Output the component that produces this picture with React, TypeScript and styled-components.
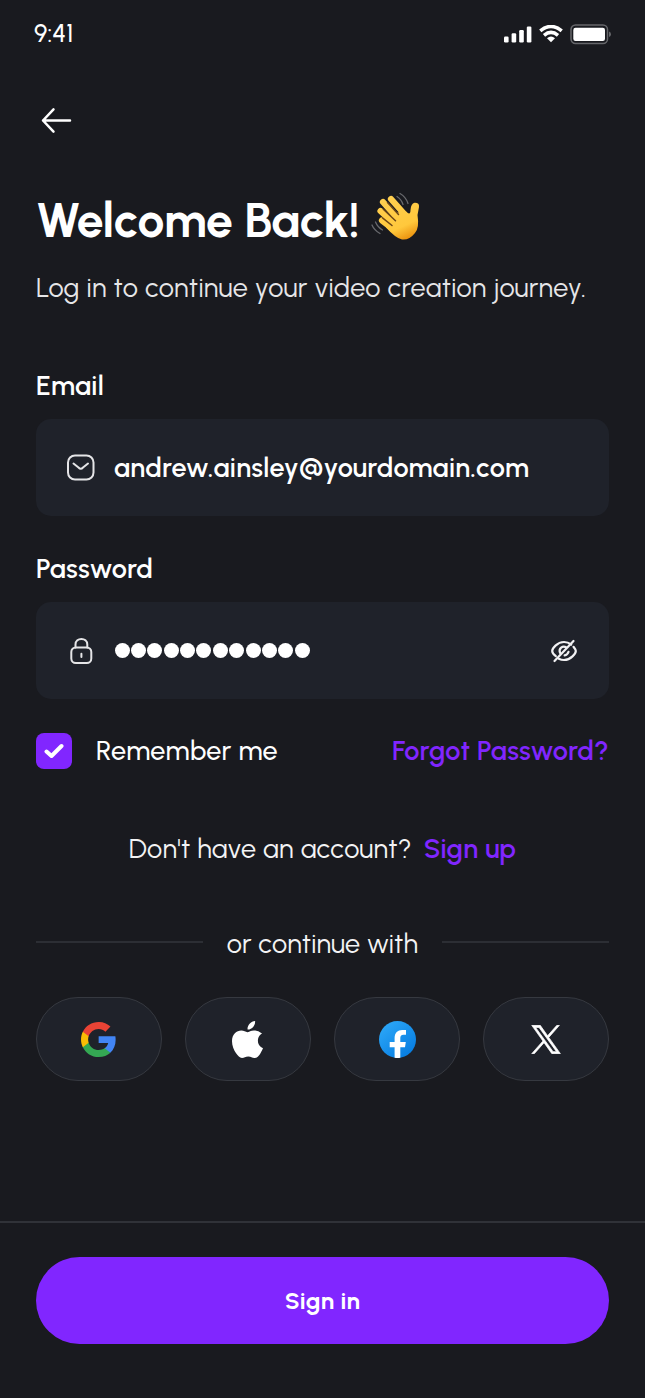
import React from 'react';
import styled, { createGlobalStyle } from 'styled-components';

const GlobalStyle = createGlobalStyle`
  * { box-sizing: border-box; }
  body { margin: 0; background: #191a1f; }
  svg { display: block; flex: none; }
`;

const Screen = styled.div`
  width: 645px;
  height: 1398px;
  display: flex;
  flex-direction: column;
  background: #191a1f;
  color: #fff;
  font-family: Urbanist, Lato, 'Liberation Sans', sans-serif;
  overflow: hidden;
`;

const StatusBar = styled.header`
  height: 65px;
  padding: 0 34px;
  display: flex;
  align-items: center;
  justify-content: space-between;
`;

const StatusIcons = styled.div`
  display: flex;
  align-items: center;
  gap: 7px;
  margin-top: 3px;
`;

const Text = styled.span<{ $size?: number; $weight?: number; $track?: number; $color?: string }>`
  font-size: ${(p) => p.$size ?? 27}px;
  font-weight: ${(p) => p.$weight ?? 400};
  letter-spacing: ${(p) => p.$track ?? 0.3}px;
  color: ${(p) => p.$color ?? '#fff'};
  line-height: 34px;
  white-space: nowrap;
`;

const BackButton = styled.button`
  width: 32px;
  height: 32px;
  margin: 39px 0 0 40px;
  padding: 0;
  border: 0;
  background: none;
`;

const Main = styled.main`
  flex: 1;
  padding: 54px 36px 0;
  display: flex;
  flex-direction: column;
`;

const Heading = styled.div`
  height: 60px;
  display: flex;
  gap: 13px;

  svg {
    margin-top: 2px;
  }
`;

const Title = styled.h1`
  width: 322px;
  margin: 0;
  font-size: 48px;
  font-weight: 700;
  line-height: 60px;
  letter-spacing: 0;
  white-space: nowrap;
`;

const Subtitle = styled.div`
  height: 34px;
  margin: 21px 0 64px;
  display: flex;
`;

const FieldGroup = styled.label`
  height: 147px;
  margin-bottom: 36px;
  display: flex;
  flex-direction: column;
  gap: 16px;
`;

const Field = styled.div`
  height: 97px;
  padding: 0 32px 0 30px;
  display: flex;
  align-items: center;
  border-radius: 15px;
  background: #1f222a;
`;

const FieldIcon = styled.span`
  width: 48px;
  display: flex;
`;

const Dots = styled.span`
  flex: 1;
  display: flex;
  gap: 1.4px;
  padding-left: 0.5px;
`;

const Dot = styled.i`
  width: 15px;
  height: 15px;
  border-radius: 50%;
  background: #fff;
`;

const Options = styled.div`
  height: 36px;
  margin-top: -2px;
  display: flex;
  align-items: center;
  justify-content: space-between;
`;

const Remember = styled.div`
  display: flex;
  align-items: center;
  gap: 24px;
`;

const Checkbox = styled.span`
  width: 36px;
  height: 36px;
  border-radius: 8px;
  background: #8126ff;
  display: grid;
  place-items: center;
`;

const SignUpLine = styled.div`
  height: 34px;
  margin-top: 63px;
  display: flex;
  justify-content: center;
  gap: 12px;
`;

const Divider = styled.div`
  height: 34px;
  margin-top: 61px;
  display: grid;
  grid-template-columns: 167px 1fr 167px;
  align-items: center;
  justify-items: center;
`;

const Rule = styled.i`
  width: 167px;
  height: 2px;
  margin-bottom: 4px;
  background: #2c2e34;
`;

const Socials = styled.div`
  margin-top: 36px;
  display: flex;
  justify-content: space-between;
`;

const SocialButton = styled.button`
  width: 125.5px;
  height: 84px;
  padding: 1px 0 0;
  display: grid;
  place-items: center;
  border: 1px solid #363940;
  border-radius: 42px;
  background: #1f222a;
`;

const Footer = styled.footer`
  height: 177px;
  padding: 34px 36px 0;
  border-top: 2px solid #303238;
`;

const SignIn = styled.button`
  width: 573px;
  height: 87px;
  border: 0;
  border-radius: 44px;
  background: #8126ff;
  font-family: inherit;
`;

const Signal = () => (
  <svg width="28" height="17" viewBox="0 0 28 17" fill="#fff">
    <rect x="0" y="10.5" width="4.6" height="6" rx="1.2" />
    <rect x="7.6" y="7.3" width="4.6" height="9.2" rx="1.2" />
    <rect x="15.2" y="4" width="4.6" height="12.5" rx="1.2" />
    <rect x="22.8" y="0.6" width="4.6" height="15.9" rx="1.2" />
  </svg>
);

const Wifi = () => (
  <svg width="24" height="18" viewBox="0 0 24 18" fill="none" stroke="#fff" strokeWidth="3.5">
    <path d="M1.3 5.9Q12-3 22.7 5.9" />
    <path d="M5 10.3Q12 4.4 19 10.3" />
    <path d="M8 13.2Q12 10 16 13.2L12 17.2Z" fill="#fff" stroke="none" />
  </svg>
);

const Battery = () => (
  <svg width="41" height="21" viewBox="0 0 41 21">
    <rect x="1" y="1" width="36.5" height="18.5" rx="4.5" fill="none" stroke="#65666a" strokeWidth="1.5" />
    <rect x="3.3" y="3.7" width="31.7" height="13.2" rx="2.2" fill="#fff" />
    <path d="M39 7.5Q41 8.3 41 10.3T39 13Z" fill="#65666a" />
  </svg>
);

const Wave = () => (
  <svg width="50" height="50" viewBox="0 0 50 50" fill="none" strokeLinecap="round">
    <defs>
      <linearGradient id="hand" x1="14" y1="6" x2="34" y2="49" gradientUnits="userSpaceOnUse">
        <stop stopColor="#ffcf50" />
        <stop offset=".7" stopColor="#ffc83c" />
        <stop offset="1" stopColor="#e98f0c" />
      </linearGradient>
    </defs>
    <path d="M20 7L35 24M12 10L28 28M9.5 19L26 34M11 28.5L26 40" stroke="url(#hand)" strokeWidth="6.2" />
    <path d="M22 21L35 19.5Q39.5 24 39.5 18Q40 11.5 43.5 10.8Q48.5 10.5 48 15L46.5 23Q48.5 36 44 41Q38 48.5 31 47.5Q25 46.5 15 35.5Z" fill="url(#hand)" />
    <path d="M16.5 10.5L27.5 22.5M12.3 17.3L24.5 28.8M11.5 25.8L21 33.5" stroke="#6b4618" strokeWidth="1.5" />
    <path d="M29 1.5Q35 5 37 11.5M26 4.5Q30.5 7.5 32 12.5M1 33Q3 38 9 41.5M4.5 30Q6.5 35 11.5 38" stroke="#68696d" strokeWidth="1.3" />
  </svg>
);

const Mail = () => (
  <svg width="30" height="28" viewBox="0 0 30 28" fill="none" stroke="#e5e5e7" strokeWidth="2" strokeLinecap="round" strokeLinejoin="round">
    <rect x="2" y="1.5" width="25.5" height="24" rx="7" />
    <path d="M7.5 9.5L12.5 13.5Q14.8 16 17 13.5L22 9.5" />
  </svg>
);

const Lock = () => (
  <svg width="30" height="28" viewBox="0 0 30 28" fill="none" stroke="#e5e5e7" strokeWidth="2" strokeLinecap="round">
    <rect x="5.3" y="10.5" width="20" height="15.5" rx="4.5" />
    <path d="M9.5 10.5V7.5C9.5 0 21.3 0 21.3 7.5V10.5M15.4 16.7V20" />
  </svg>
);

const EyeOff = () => (
  <svg width="26" height="24" viewBox="0 0 26 24" fill="none" stroke="#f1f1f3" strokeWidth="2.2" strokeLinecap="round">
    <path d="M4.8 17.2C2.5 15.3 1.2 13 1.2 12C1.2 9.6 6 3 13 3C16 3 18.2 4 20.2 5.5M22.5 7.8C24 9.7 24.8 11.3 24.8 12C24.8 14.4 20 21 13 21C11 21 9.4 20.5 7.8 19.7" />
    <path d="M9 13.8C7.4 9.5 11.5 6 15.5 8.5M17.5 12.8Q16.5 15.8 13.6 16.3M3.5 22L22.5 2" />
  </svg>
);

const Google = () => (
  <svg width="35" height="35" viewBox="0 0 48 48">
    <path fill="#4285F4" d="M47.5 24.6c0-1.7-.1-3.3-.4-4.9H24.2v9.2h13.1c-.6 3-2.3 5.5-4.9 7.2v6h7.8c4.7-4.3 7.3-10.6 7.3-17.5z" />
    <path fill="#34A853" d="M24.2 48c6.6 0 12.1-2.2 16.1-5.9l-7.8-6c-2.2 1.5-5 2.3-8.3 2.3-6.4 0-11.8-4.3-13.7-10.1h-8v6.2C6.4 42.6 14.7 48 24.2 48z" />
    <path fill="#FBBC04" d="M10.5 28.3c-1-2.8-1-5.9 0-8.7v-6.2h-8c-3.3 6.7-3.3 14.5 0 21.1z" />
    <path fill="#EA4335" d="M24.2 9.5c3.5 0 6.8 1.3 9.3 3.7l6.9-6.9C36 2.2 30.2-.1 24.2 0 14.7 0 6.4 5.4 2.5 13.4l8 6.2c1.9-5.8 7.3-10.1 13.7-10.1z" />
  </svg>
);

const Apple = () => (
  <svg width="31" height="37" viewBox="0 0 814 1000" preserveAspectRatio="none" fill="#fff">
    <path d="M788 341c-6 4-108 62-108 190 0 149 130 201 134 202-1 3-21 72-69 142-42 62-87 123-155 123s-85-39-163-39c-76 0-103 40-165 40s-105-57-155-127C49 791 0 667 0 549c0-189 123-290 244-290 65 0 118 43 159 43 38 0 99-46 172-46 28 0 128 3 213 85zM556 161c31-37 52-88 52-139 0-7-1-14-2-20-50 2-109 33-144 75-28 32-55 83-55 135 0 8 1 16 2 18 3 1 8 1 13 1 45 0 102-30 134-70z" />
  </svg>
);

const Facebook = () => (
  <svg width="37" height="37" viewBox="0 0 37 37">
    <defs>
      <linearGradient id="fb" x1="6" y1="4" x2="30" y2="33" gradientUnits="userSpaceOnUse">
        <stop stopColor="#2aa5f7" />
        <stop offset="1" stopColor="#087ee1" />
      </linearGradient>
    </defs>
    <circle cx="18.5" cy="18.5" r="18.5" fill="url(#fb)" />
    <path fill="#fff" d="M15.6 36.8V26.2H10.7V21H15.6V17C15.6 11.8 18.7 9 23.2 9H27V13.8H24.5C22.1 13.8 21.3 15.2 21.3 17V21H26.8L26 26.2H21.3V36.8Q18.5 37.2 15.6 36.8Z" />
  </svg>
);

const XLogo = () => (
  <svg width="30" height="29" viewBox="-0.3 -0.3 24.6 24.6" preserveAspectRatio="none" fill="#fff" stroke="#fff" strokeWidth="0.6">
    <path d="M14.3 10.2 23 0h-2.1l-7.6 8.8L7.3 0h-7l9.2 13.3L.3 24h2.1l8-9.3 6.4 9.3h7zM3.5 1.8h2.8l14.3 20.5h-2.8z" />
  </svg>
);

export default function App() {
  return (
    <>
      <GlobalStyle />
      <Screen>
        <StatusBar>
          <Text $size={25} $weight={500} $track={0.1}>9:41</Text>
          <StatusIcons>
            <Signal />
            <Wifi />
            <Battery />
          </StatusIcons>
        </StatusBar>
        <BackButton aria-label="Back">
          <svg width="32" height="32" viewBox="0 0 32 32" fill="none" stroke="#fff" strokeWidth="2.5" strokeLinecap="round" strokeLinejoin="round">
            <path d="M13.5 5.3L3 16.5L13.5 27.7M3 16.5H30" />
          </svg>
        </BackButton>
        <Main>
          <Heading>
            <Title>Welcome Back!</Title>
            <Wave />
          </Heading>
          <Subtitle>
            <Text $color="#e6e6e8">Log in to continue your video creation journey.</Text>
          </Subtitle>
          <FieldGroup>
            <Text $weight={600}>Email</Text>
            <Field>
              <FieldIcon><Mail /></FieldIcon>
              <Text $weight={600}>andrew.ainsley@yourdomain.com</Text>
            </Field>
          </FieldGroup>
          <FieldGroup>
            <Text $weight={600}>Password</Text>
            <Field>
              <FieldIcon><Lock /></FieldIcon>
              <Dots>{Array.from({ length: 12 }, (_, i) => <Dot key={i} />)}</Dots>
              <EyeOff />
            </Field>
          </FieldGroup>
          <Options>
            <Remember>
              <Checkbox>
                <svg width="20" height="16" viewBox="0 0 20 16" fill="none" stroke="#fff" strokeWidth="4" strokeLinecap="round" strokeLinejoin="round">
                  <path d="M2.5 8.5L7.5 13L17.5 3" />
                </svg>
              </Checkbox>
              <Text $weight={500}>Remember me</Text>
            </Remember>
            <Text $weight={600} $color="#8126ff">Forgot Password?</Text>
          </Options>
          <SignUpLine>
            <Text $color="#f3f3f4">Don't have an account?</Text>
            <Text $weight={600} $color="#8126ff">Sign up</Text>
          </SignUpLine>
          <Divider>
            <Rule />
            <Text $track={0.15} $color="#f3f3f4">or continue with</Text>
            <Rule />
          </Divider>
          <Socials>
            <SocialButton aria-label="Google"><Google /></SocialButton>
            <SocialButton aria-label="Apple"><Apple /></SocialButton>
            <SocialButton aria-label="Facebook"><Facebook /></SocialButton>
            <SocialButton aria-label="X"><XLogo /></SocialButton>
          </Socials>
        </Main>
        <Footer>
          <SignIn><Text $size={24} $weight={700}>Sign in</Text></SignIn>
        </Footer>
      </Screen>
    </>
  );
}
